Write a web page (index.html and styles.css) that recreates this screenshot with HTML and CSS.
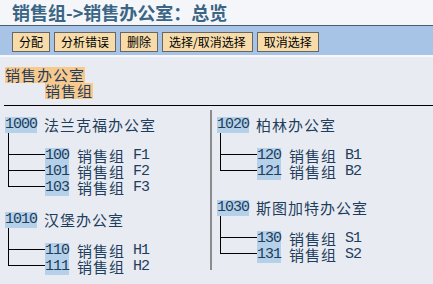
FILE: index.html
```html
<!DOCTYPE html>
<html>
<head>
  <meta charset="utf-8">
  <meta name="viewport" content="width=device-width, initial-scale=1">
  <title>销售组->销售办公室：总览</title>
  <link rel="stylesheet" href="styles.css">
</head>
<body>
<header class="title">销售组-&gt;销售办公室：总览</header>
<div class="toolbar">
  <button>分配</button>
  <button>分析错误</button>
  <button>删除</button>
  <button>选择/取消选择</button>
  <button>取消选择</button>
</div>
<main>
  <div class="legend">
    <span class="office">销售办公室</span>
    <span class="group">销售组</span>
  </div>
  <div class="rule"></div>
  <div class="tree">
    <div class="col left">
      <div class="node">
        <div class="head"><span class="code">1000</span><span class="zh">法兰克福办公室</span></div>
        <ul class="kids">
          <li><span class="code">100</span><span class="zh">销售组</span><span>F1</span></li>
          <li><span class="code">101</span><span class="zh">销售组</span><span>F2</span></li>
          <li><span class="code">103</span><span class="zh">销售组</span><span>F3</span></li>
        </ul>
      </div>
      <div class="node">
        <div class="head"><span class="code">1010</span><span class="zh">汉堡办公室</span></div>
        <ul class="kids">
          <li><span class="code">110</span><span class="zh">销售组</span><span>H1</span></li>
          <li><span class="code">111</span><span class="zh">销售组</span><span>H2</span></li>
        </ul>
      </div>
    </div>
    <div class="col right">
      <div class="node">
        <div class="head"><span class="code">1020</span><span class="zh">柏林办公室</span></div>
        <ul class="kids">
          <li><span class="code">120</span><span class="zh">销售组</span><span>B1</span></li>
          <li><span class="code">121</span><span class="zh">销售组</span><span>B2</span></li>
        </ul>
      </div>
      <div class="node">
        <div class="head"><span class="code">1030</span><span class="zh">斯图加特办公室</span></div>
        <ul class="kids">
          <li><span class="code">130</span><span class="zh">销售组</span><span>S1</span></li>
          <li><span class="code">131</span><span class="zh">销售组</span><span>S2</span></li>
        </ul>
      </div>
    </div>
  </div>
</main>
</body>
</html>
```

FILE: styles.css
```css
body {
  margin: 0;
  background: #e8ecf2;
  font-family: "Noto Sans CJK SC", sans-serif;
  color: #1f3d5c;
}

.title {
  height: 25px;
  line-height: 25px;
  padding-left: 12px;
  background: #f4f6f9;
  font-size: 18px;
  font-weight: bold;
  color: #3b6585;
  border-bottom: 1px solid #4d5d6d;
}

.toolbar {
  display: flex;
  align-items: flex-start;
  gap: 4px;
  height: 23px;
  padding: 6px 12px 0;
  background: #a7c3e5;
  border-bottom: 2px solid #f6f8fb;
}

button {
  height: 20px;
  padding: 0 6px;
  border: 1px solid #666;
  background: #f7dcaa;
  color: #000;
  font-family: "Noto Sans CJK SC", sans-serif;
  font-size: 12px;
  line-height: 18px;
}

.legend {
  display: flex;
  flex-direction: column;
  align-items: flex-start;
  padding: 10px 0 0 5px;
  font-size: 15px;
  letter-spacing: 1px;
  line-height: 16px;
}

.legend span {
  height: 16px;
  background: #f8c98c;
}

.legend .group {
  margin-left: 40px;
}

.rule {
  margin: 6px 0 0 4px;
  border-top: 1px solid #000;
}

.tree {
  display: grid;
  grid-template-columns: 210px 1fr;
  align-items: start;
  margin-top: 4px;
}

.col {
  display: flex;
  flex-direction: column;
  gap: 16px;
  padding: 7px 0 0 5px;
}

.col.right {
  box-sizing: border-box;
  height: 160px;
  gap: 20px;
  border-left: 2px solid #8c8c8c;
}

.head,
.kids li {
  display: flex;
  align-items: center;
  height: 16px;
  font-family: "Liberation Mono", monospace;
  font-size: 15px;
  letter-spacing: -1px;
  line-height: 16px;
}

.head {
  gap: 7px;
}

.code {
  height: 16px;
  background: #b5d1ea;
}

.zh {
  font-family: "Noto Sans CJK SC", sans-serif;
  font-size: 15px;
  letter-spacing: 1px;
}

.kids {
  list-style: none;
  margin: 15px 0 0 3px;
  padding: 0 0 0 37px;
}

.kids li {
  position: relative;
  gap: 8px;
}

.kids li::before {
  content: "";
  position: absolute;
  left: -37px;
  top: -9px;
  width: 36px;
  height: 15px;
  border-left: 1px solid #000;
  border-bottom: 1px solid #000;
}

.kids li:first-child::before {
  top: -15px;
  height: 21px;
}
```
